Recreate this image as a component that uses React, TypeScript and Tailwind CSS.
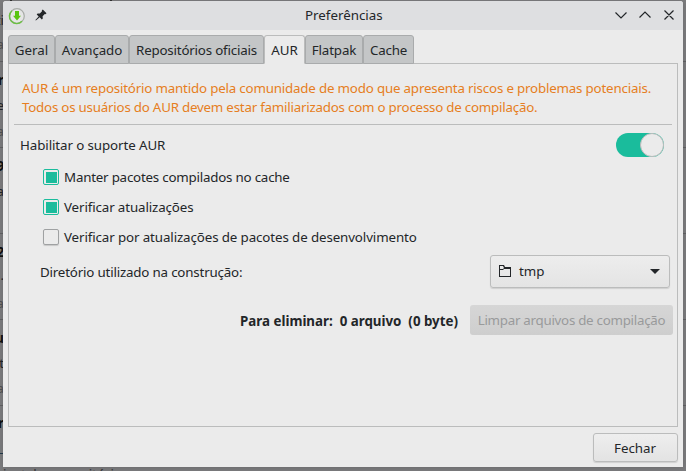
import React from 'react';

const tabs = [
  { label: 'Geral', width: 'w-[47px]', spacing: '' },
  { label: 'Avançado', width: 'w-[74px]', spacing: 'tracking-[-0.1px]' },
  { label: 'Repositórios oficiais', width: 'w-[135px]', spacing: 'tracking-[-0.19px]' },
  { label: 'AUR', width: 'w-[41px]', spacing: '', active: true },
  { label: 'Flatpak', width: 'w-[58px]', spacing: 'tracking-[-0.12px]' },
  { label: 'Cache', width: 'w-[51px]', spacing: 'tracking-[-0.25px]' },
];

const options = [
  { label: 'Manter pacotes compilados no cache', checked: true, spacing: 'tracking-[-0.21px]' },
  { label: 'Verificar atualizações', checked: true, spacing: 'tracking-[-0.12px]' },
  { label: 'Verificar por atualizações de pacotes de desenvolvimento', checked: false, spacing: 'tracking-[-0.11px]' },
];

/* Slivers of the package list that stay visible behind the dialog. */
const fragments = [
  { text: 'ti', style: 'top-[10px] text-[#242629]' },
  { text: 'a', style: 'top-[34px] text-[#505153]' },
  { text: 'r', style: 'top-[70px] font-bold text-[#111]' },
  { text: 'e', style: 'top-[95px] text-[#242629]' },
  { text: 'a', style: 'top-[121px] text-[#505153]' },
  { text: '9', style: 'top-[156px] font-bold text-[#111]' },
  { text: 'a', style: 'top-[181px] text-[#242629]' },
  { text: '2', style: 'top-[242px] font-bold text-[#111]' },
  { text: '.', style: 'top-[265px] text-[#242629]' },
  { text: 'a', style: 'top-[293px] text-[#505153]' },
  { text: 'u', style: 'top-[328px] font-bold text-[#111]' },
  { text: 't', style: 'top-[353px] text-[#242629]' },
  { text: 'a', style: 'top-[378px] text-[#505153]' },
  { text: 'r', style: 'top-[413px] font-bold text-[#111]' },
  { text: 'L', style: 'top-[439px] text-[#20384a]' },
];

const rules = ['top-[61px]', 'top-[147px]', 'top-[233px]', 'top-[319px]', 'top-[405px]'];

function Backdrop() {
  return (
    <div className="absolute inset-0 overflow-hidden">
      {rules.map((top) => (
        <div key={top} className={`absolute inset-x-0 h-px bg-[#626264] ${top}`} />
      ))}
      {fragments.map((f) => (
        <span key={f.style} className={`absolute right-[682px] leading-5 ${f.style}`}>{f.text}</span>
      ))}
      <span className="absolute left-[3px] top-[464px] leading-5 text-[#343436]">instalar repositório</span>
      <div className="absolute left-[10px] top-0 h-px w-[2px] bg-[#333]" />
      <div className="absolute left-[110px] top-0 h-px w-[2px] bg-[#333]" />
    </div>
  );
}

function TitleBar() {
  return (
    <header className="flex h-[29px] items-center rounded-t-[3px] bg-[#dedfe1]">
      <svg className="ml-[5px] h-[18px] w-[18px]" viewBox="0 0 18 18">
        <circle cx="9" cy="9" r="7.3" fill="#e5e6e5" stroke="#a8aca7" strokeWidth="1.2" />
        <path d="M4 3.7A7.3 7.3 0 1 0 14 14.3" fill="none" stroke="#6bbf43" strokeWidth="1.4" />
        <path d="M7 4h4v4.7h2L9 13.4 5 8.7h2z" fill="#58c510" />
      </svg>
      <svg className="-mt-px ml-[9px] h-[12px] w-[12px]" viewBox="0 0 12 12" fill="#232629">
        <path d="M7.8.5l3.7 3.7-1 1-.7-.1-2.2 2.2.2 2.2-1 .9-2.1-2.1-3.8 3.200-.5-.4 3.300-3.700-2-2 .9-1 2.200.2L7 2.300l-.2-.8z" />
      </svg>
      <h1 className="ml-[258px] w-[80px] whitespace-nowrap text-[#232629]">Preferências</h1>
      <svg className="-mt-px ml-[228px] h-[12px] w-[62px] shrink-0" viewBox="0 0 62 12" fill="none" stroke="#232629" strokeWidth="1.2">
        <path d="M2.500 3.500l5.500 5.500 5.500-5.500M26.500 8.500L32 3l5.500 5.500M51.500 1.500l9 9M60.500 1.500l-9 9" />
      </svg>
    </header>
  );
}

export default function App() {
  return (
    <div className="relative h-[471px] w-[686px] overflow-hidden bg-[#7c7c7e] font-['Noto_Sans',sans-serif] text-[13.333px] text-[#232629]">
      <Backdrop />
      <div className="absolute left-[3px] top-px h-[466px] w-[680px] rounded-t-[3px] bg-[#ebebeb] shadow-[0_1px_6px_rgba(0,0,0,0.15)]">
        <TitleBar />
        <div className="px-[5px] pt-[5px]">
          <nav className="relative -mb-px flex h-[29px]">
            {tabs.map((t) => (
              <div
                key={t.label}
                className={`flex shrink-0 items-center justify-center whitespace-nowrap rounded-t-[3px] border pt-[2px] ${t.width} ${t.spacing} ${
                  t.active ? 'border-[#bbbcbc] border-b-[#ebebeb] bg-[#ebebeb]' : 'border-[#a9abac] bg-[#c4c6c7]'
                }`}
              >
                {t.label}
              </div>
            ))}
          </nav>
          <main className="h-[364px] w-[670px] border border-[#bbbcbc] px-[5px] pt-[15px]">
            <p className="h-[45px] whitespace-nowrap pl-[8px] leading-[19px] text-[#e67e22]">
              <span className="tracking-[-0.185px]">AUR é um repositório mantido pela comunidade de modo que apresenta riscos e problemas potenciais.</span>
              <br />
              <span className="tracking-[-0.22px]">Todos os usuários do AUR devem estar familiarizados com o processo de compilação.</span>
            </p>
            <hr className="border-[#bbbcbc]" />
            <div className="mt-[8px] flex h-[24px] items-center justify-between pl-[6px] pr-[8px]">
              <span className="pt-[2px] tracking-[-0.09px]">Habilitar o suporte AUR</span>
              <div className="flex h-[24px] w-[48px] justify-end rounded-full bg-[#1abc9c]">
                <div className="h-[24px] w-[24px] rounded-full border border-[#bbbcbc] bg-[#ebebeb]" />
              </div>
            </div>
            <div className="mt-[5px]">
              {options.map((o) => (
                <div key={o.label} className="flex h-[30px] items-center pl-[29px]">
                  <span
                    className={`flex h-[16px] w-[16px] items-center justify-center rounded-[2px] border ${
                      o.checked ? 'border-[#1abc9c]' : 'border-[#9fa1a2] shadow-[0_1px_1px_rgba(0,0,0,0.15)]'
                    }`}
                  >
                    {o.checked && <span className="h-[11px] w-[11px] bg-[#1abc9c]" />}
                  </span>
                  <span className={`ml-[5px] whitespace-nowrap pt-[2px] ${o.spacing}`}>{o.label}</span>
                </div>
              ))}
            </div>
            <div className="mt-[2px] flex h-[34px] items-center justify-between pl-[26px] pr-[2px]">
              <span className="pt-[4px] tracking-[-0.18px]">Diretório utilizado na construção:</span>
              <button className="flex h-[33px] w-[180px] items-center rounded-[3px] border border-[#bbbcbc] bg-linear-to-b from-[#ededed] to-[#e4e4e4] pl-[8px] shadow-[0_1px_1px_rgba(0,0,0,0.12)]">
                <svg className="h-[12px] w-[12px]" viewBox="0 0 12 12" fill="#232629">
                  <path d="M0 0h5l1 2h6v10H0zM1 1v3h3l1-1-1-2zM1 5v6h10V4H5L4 5z" fillRule="evenodd" />
                </svg>
                <span className="ml-[8px] pt-[2px]">tmp</span>
                <svg className="ml-auto mr-[9px] h-[5px] w-[10px]" viewBox="0 0 10 6" preserveAspectRatio="none"><path d="M0 0h10L5 6z" fill="#232629" /></svg>
              </button>
            </div>
            <div className="-mr-px mt-[17px] flex h-[30px] items-center justify-end">
              <strong className="whitespace-pre pt-[3px] font-bold">Para eliminar:  0 arquivo  (0 byte)</strong>
              <button className="ml-[12px] h-[30px] w-[203px] whitespace-nowrap rounded-[3px] bg-linear-to-b from-[#d6d6d6] to-[#cecece] pt-[2px] tracking-[-0.27px] text-[#999a9b]">
                Limpar arquivos de compilação
              </button>
            </div>
          </main>
          <footer className="flex justify-end pt-[6px]">
            <button className="h-[29px] w-[85px] rounded-[3px] border border-[#bbbcbc] bg-linear-to-b from-[#eeeeee] to-[#e3e3e3] pr-px pt-[2px] shadow-[0_1px_1px_rgba(0,0,0,0.12)]">Fechar</button>
          </footer>
        </div>
      </div>
    </div>
  );
}
